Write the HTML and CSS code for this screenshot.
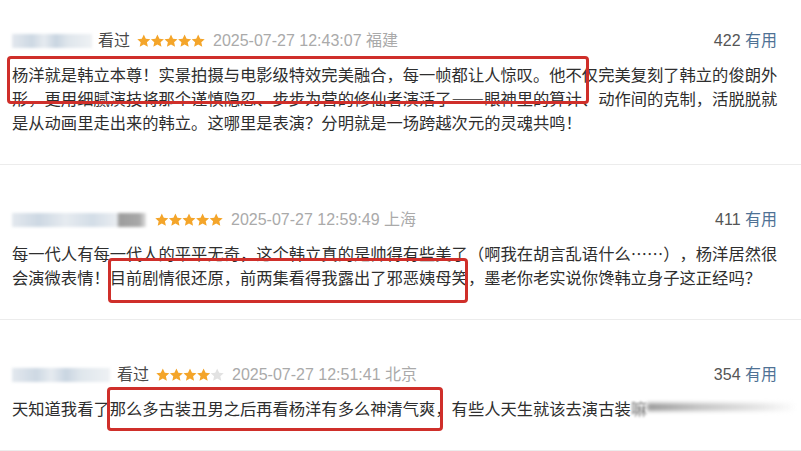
FILE: index.html
```html
<!DOCTYPE html>
<html lang="zh-CN">
<head>
    <meta charset="UTF-8">
    <meta name="viewport" content="width=device-width, initial-scale=1.0">
    <title>短评</title>
    <link rel="stylesheet" href="styles.css">
</head>
<body>
    <svg class="defs" width="0" height="0">
        <symbol id="star" viewBox="0 0 24 24">
            <path d="M12 .6l3.5 7.3 8 .9-6 5.5 1.7 7.9L12 18.2l-7.2 4 1.7-7.9-6-5.5 8-.9z"/>
        </symbol>
    </svg>

    <div class="comments">
        <div class="comment">
            <div class="comment-info">
                <span class="user user-a"></span>
                <span class="watched">看过</span>
                <svg class="rating" viewBox="0 0 120 24">
                    <use href="#star" x="0" width="24" height="24" class="on"/><use href="#star" x="24" width="24" height="24" class="on"/><use href="#star" x="48" width="24" height="24" class="on"/><use href="#star" x="72" width="24" height="24" class="on"/><use href="#star" x="96" width="24" height="24" class="on"/>
                </svg>
                <span class="time">2025-07-27 12:43:07 福建</span>
                <span class="votes"><span class="count">422</span> <a class="useful">有用</a></span>
            </div>
            <p class="comment-text">杨洋就是韩立本尊！实景拍摄与电影级特效完美融合，每一帧都让人惊叹。他不仅完美复刻了韩立的俊朗外形，更用细腻演技将那个谨慎隐忍、步步为营的修仙者演活了——眼神里的算计、动作间的克制，活脱脱就是从动画里走出来的韩立。这哪里是表演？分明就是一场跨越次元的灵魂共鸣！<span class="mark mark-1"></span></p>
        </div>

        <div class="comment">
            <div class="comment-info">
                <span class="user user-b"></span>
                <svg class="rating" viewBox="0 0 120 24">
                    <use href="#star" x="0" width="24" height="24" class="on"/><use href="#star" x="24" width="24" height="24" class="on"/><use href="#star" x="48" width="24" height="24" class="on"/><use href="#star" x="72" width="24" height="24" class="on"/><use href="#star" x="96" width="24" height="24" class="on"/>
                </svg>
                <span class="time">2025-07-27 12:59:49 上海</span>
                <span class="votes"><span class="count">411</span> <a class="useful">有用</a></span>
            </div>
            <p class="comment-text">每一代人有每一代人的平平无奇，这个韩立真的是帅得有些美了（啊我在胡言乱语什么……），杨洋居然很会演微表情！目前剧情很还原，前两集看得我露出了邪恶姨母笑，墨老你老实说你馋韩立身子这正经吗？<span class="mark mark-2"></span></p>
        </div>

        <div class="comment">
            <div class="comment-info">
                <span class="user user-c"></span>
                <span class="watched">看过</span>
                <svg class="rating" viewBox="0 0 120 24">
                    <use href="#star" x="0" width="24" height="24" class="on"/><use href="#star" x="24" width="24" height="24" class="on"/><use href="#star" x="48" width="24" height="24" class="on"/><use href="#star" x="72" width="24" height="24" class="on"/><use href="#star" x="96" width="24" height="24" class="off"/>
                </svg>
                <span class="time">2025-07-27 12:51:41 北京</span>
                <span class="votes"><span class="count">354</span> <a class="useful">有用</a></span>
            </div>
            <p class="comment-text nowrap">天知道我看了那么多古装丑男之后再看杨洋有多么神清气爽，有些人天生就该去演古装<span class="fade">嘛</span><span class="fade-bar"></span><span class="mark mark-3"></span></p>
        </div>
    </div>
</body>
</html>
```

FILE: styles.css
```css
body {
    margin: 0;
    background: #fff;
    color: #333;
    font-family: "Liberation Sans", "Noto Sans CJK SC", sans-serif;
    overflow: hidden;
}
.defs {
    position: absolute;
}
.comment {
    padding: 44px 20px 30px 12px;
    border-bottom: 1px solid #ececec;
}
.comment:first-child {
    padding-top: 30px;
}
.comment-info {
    display: flex;
    align-items: center;
    height: 22px;
    font-size: 16px;
    line-height: 22px;
}
.user {
    display: inline-block;
    height: 14px;
    filter: blur(1.5px);
    background: linear-gradient(90deg, #e3e8ee 0%, #cdd8e3 25%, #e6ebf0 40%, #c9d5e1 55%, #dfe6ec 70%, #eef1f4 100%);
}
.user-a {
    width: 80px;
    margin-right: 6px;
}
.user-b {
    width: 134px;
    margin-right: 9px;
    background: linear-gradient(90deg, #e3e8ee 0%, #cdd8e3 20%, #e6ebf0 40%, #d3dde7 60%, #e9edf1 78%, #9d9d9d 80%, #a8a8a8 95%, #e0e0e0 100%);
}
.user-c {
    width: 98px;
    margin-right: 7px;
}
.watched {
    color: #494949;
    margin-right: 7px;
}
.rating {
    width: 68px;
    height: 14px;
    margin-right: 8px;
}
.rating .on {
    fill: #f4a52a;
}
.rating .off {
    fill: #e2e2e2;
}
.time {
    color: #aaa;
}
.votes {
    margin-left: auto;
    margin-right: 4px;
    color: #555;
}
.useful {
    color: #4f7295;
}
.comment-text {
    position: relative;
    margin: 10px 0 0;
    font-family: "Noto Sans CJK SC", sans-serif;
    font-size: 16.3px;
    line-height: 24px;
    color: #2e2e2e;
    text-spacing-trim: space-all;
}
.nowrap {
    white-space: nowrap;
}
.fade {
    color: #777;
    filter: blur(1px);
}
.fade-bar {
    display: inline-block;
    width: 150px;
    height: 8px;
    vertical-align: 4px;
    background: linear-gradient(90deg, #999 0%, #c4c4c4 35%, #e6e6e6 75%, rgba(255, 255, 255, 0) 100%);
    filter: blur(2px);
}
.mark {
    position: absolute;
    box-sizing: border-box;
    border: 3px solid #cf2f2a;
    border-radius: 4px;
}
.mark-1 {
    left: -5px;
    top: -6px;
    width: 582px;
    height: 48px;
}
.mark-2 {
    left: 96px;
    top: 17px;
    width: 360px;
    height: 45px;
}
.mark-3 {
    left: 95px;
    top: -9px;
    width: 336px;
    height: 44px;
}
```
